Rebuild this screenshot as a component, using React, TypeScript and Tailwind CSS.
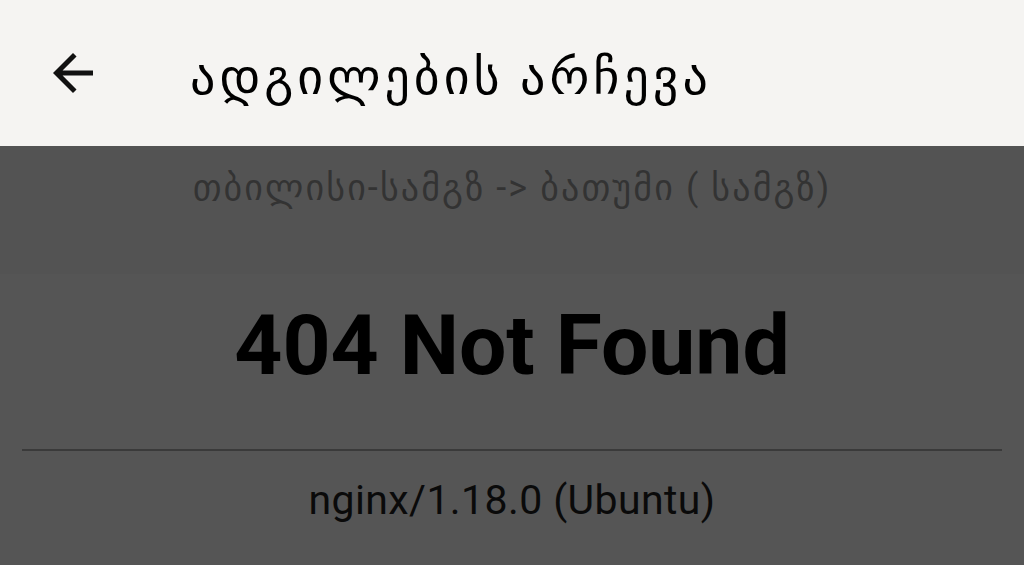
export default function App() {
  return (
    <div className="flex h-[565px] w-[1024px] flex-col overflow-hidden bg-[#555555] font-['Roboto','DejaVu_Sans',sans-serif]">
      <header className="flex h-[146px] shrink-0 items-center bg-[#f5f4f2] pl-[43px]">
        <svg viewBox="0 0 24 24" className="h-[60px] w-[60px] shrink-0 fill-[#111]">
          <path d="M20 11H7.83l5.59-5.59L12 4l-8 8 8 8 1.41-1.41L7.83 13H20v-2z" />
        </svg>
        <h1 className="ml-[87px] mt-[8px] text-[50px] leading-none tracking-[4px] text-black">ადგილების არჩევა</h1>
      </header>

      <div className="flex h-[128px] shrink-0 justify-center bg-[#535353] pt-[24px]">
        <p className="text-[36px] leading-none tracking-[2.1px] text-[#333]">თბილისი-სამგზ -&gt; ბათუმი ( სამგზ)</p>
      </div>

      <div className="flex flex-1 flex-col">
        <h2 className="mt-[30px] text-center text-[84px] font-bold leading-none text-black">404 Not Found</h2>
        <hr className="mx-[22px] mt-[61px] border-t-2 border-[#3a3a3a]" />
        <p className="mt-[29px] text-center text-[41px] leading-none tracking-[0.4px] text-[#0a0a0a]">nginx/1.18.0 (Ubuntu)</p>
      </div>
    </div>
  );
}
